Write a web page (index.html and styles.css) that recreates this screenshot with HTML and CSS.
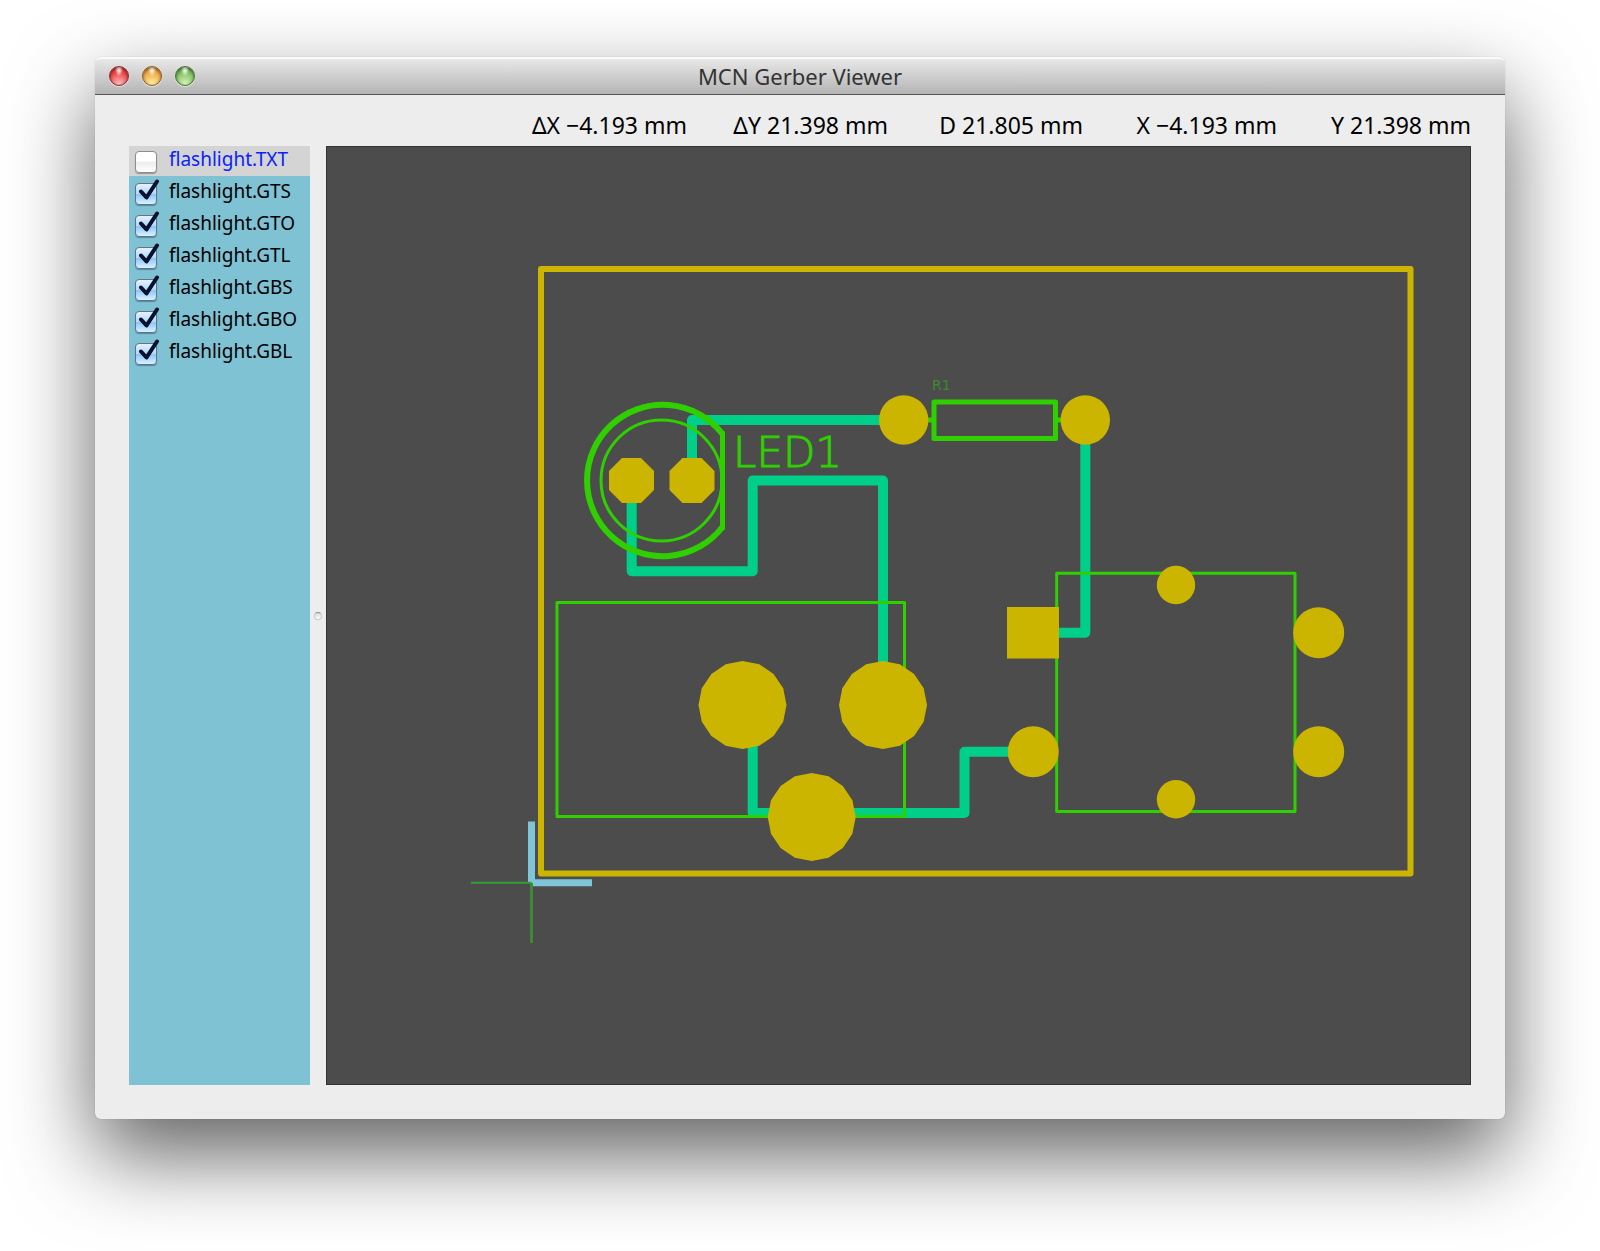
FILE: index.html
```html
<!DOCTYPE html>
<html lang="en">
<head>
<meta charset="utf-8">
<meta name="viewport" content="width=device-width, initial-scale=1">
<title>MCN Gerber Viewer</title>
<link rel="stylesheet" href="styles.css">
</head>
<body>
<div class="window">
  <header class="titlebar">
    <div class="lights">
      <button class="light light-close" type="button" aria-label="Close"></button>
      <button class="light light-minimize" type="button" aria-label="Minimize"></button>
      <button class="light light-zoom" type="button" aria-label="Zoom"></button>
    </div>
    <h1 class="title">MCN Gerber Viewer</h1>
  </header>
  <main class="content">
    <div class="readouts">
      <output>ΔX −4.193 mm</output>
      <output>ΔY 21.398 mm</output>
      <output>D 21.805 mm</output>
      <output>X −4.193 mm</output>
      <output>Y 21.398 mm</output>
    </div>
    <div class="split">
      <ul class="layers">
        <li class="layer layer-selected"><span class="tick"><input type="checkbox" id="txt"><svg viewBox="0 0 26 26" aria-hidden="true"><path d="M6 12.5 11.5 18.5 22 2.500"/></svg></span><label for="txt">flashlight.TXT</label></li>
        <li class="layer"><span class="tick"><input type="checkbox" id="gts" checked><svg viewBox="0 0 26 26" aria-hidden="true"><path d="M6 12.5 11.5 18.5 22 2.500"/></svg></span><label for="gts">flashlight.GTS</label></li>
        <li class="layer"><span class="tick"><input type="checkbox" id="gto" checked><svg viewBox="0 0 26 26" aria-hidden="true"><path d="M6 12.5 11.5 18.5 22 2.500"/></svg></span><label for="gto">flashlight.GTO</label></li>
        <li class="layer"><span class="tick"><input type="checkbox" id="gtl" checked><svg viewBox="0 0 26 26" aria-hidden="true"><path d="M6 12.5 11.5 18.5 22 2.500"/></svg></span><label for="gtl">flashlight.GTL</label></li>
        <li class="layer"><span class="tick"><input type="checkbox" id="gbs" checked><svg viewBox="0 0 26 26" aria-hidden="true"><path d="M6 12.5 11.5 18.5 22 2.500"/></svg></span><label for="gbs">flashlight.GBS</label></li>
        <li class="layer"><span class="tick"><input type="checkbox" id="gbo" checked><svg viewBox="0 0 26 26" aria-hidden="true"><path d="M6 12.5 11.5 18.5 22 2.500"/></svg></span><label for="gbo">flashlight.GBO</label></li>
        <li class="layer"><span class="tick"><input type="checkbox" id="gbl" checked><svg viewBox="0 0 26 26" aria-hidden="true"><path d="M6 12.5 11.5 18.5 22 2.500"/></svg></span><label for="gbl">flashlight.GBL</label></li>
      </ul>
      <div class="divider" role="separator" aria-orientation="vertical"><span class="grip"></span></div>
      <svg class="board" viewBox="326 146 1145 939" role="img" aria-label="Flashlight circuit board">
        <defs>
          <polygon id="pad16" points="0,-44 16.8,-40.7 31.1,-31.1 40.7,-16.8 44,0 40.7,16.8 31.1,31.1 16.8,40.7 0,44 -16.8,40.7 -31.1,31.1 -40.7,16.8 -44,0 -40.7,-16.8 -31.1,-31.1 -16.8,-40.7"/>
          <polygon id="pad8" points="-9.5,-22.5 9.5,-22.5 22.5,-9.5 22.5,9.5 9.5,22.5 -9.5,22.5 -22.5,9.5 -22.5,-9.5"/>
        </defs>
        <g class="copper">
          <path d="M692 480.500V420H904"/>
          <path d="M631.700 480.500V571.300H752.700V480.500H883V705"/>
          <path d="M1085.300 420V632.700H1033"/>
          <path d="M752.700 720V813H964.500V751.700H1033"/>
        </g>
        <g class="silk">
          <path class="heavy" d="M722.500 434A75.700 75.700 0 1 0 722.500 527"/>
          <path class="medium" d="M722.500 433V528"/>
          <circle cx="661.500" cy="480.500" r="60.500"/>
          <path class="medium" d="M934 402H1055.500V438.500H934ZM925 420H934M1055.500 420H1065"/>
          <rect x="557" y="602.500" width="347.500" height="214"/>
          <rect x="1056.700" y="573.300" width="238.300" height="238.300"/>
        </g>
        <rect class="outline" x="541" y="269" width="869.500" height="604.500"/>
        <g class="pads">
          <use href="#pad8" x="631.500" y="480.500"/>
          <use href="#pad8" x="692" y="480.500"/>
          <circle cx="903.700" cy="420" r="24.700"/>
          <circle cx="1085.300" cy="420" r="24.700"/>
          <rect x="1007" y="607" width="52" height="51.500"/>
          <circle cx="1033.200" cy="751.700" r="25.500"/>
          <circle cx="1318.700" cy="632.700" r="25.500"/>
          <circle cx="1318.700" cy="751.700" r="25.500"/>
          <circle cx="1176" cy="585" r="19.200"/>
          <circle cx="1176" cy="799.300" r="19.200"/>
          <use href="#pad16" x="742.500" y="705"/>
          <use href="#pad16" x="883" y="705"/>
          <use href="#pad16" x="811.700" y="817"/>
        </g>
        <path class="origin" d="M531.500 821.500V883M531.500 882.700H592"/>
        <path class="cursor" d="M471 882.700H531.500"/>
        <path class="cursor-y" d="M531.500 883V943"/>
        <text class="led" x="733" y="467">LED1</text>
        <text class="ref" x="932" y="390">R1</text>
      </svg>
    </div>
  </main>
</div>
</body>
</html>
```
FILE: styles.css
```css
* { box-sizing: border-box; }

body {
  margin: 0;
  padding: 57px 95px 132px;
  min-height: 100vh;
  display: flex;
  background: #fff;
  font-family: "Noto Sans", "Open Sans", sans-serif;
  color: #000;
}

.window {
  flex: 1;
  min-width: 0;
  display: flex;
  flex-direction: column;
  background: #ededed;
  border-radius: 6px;
  box-shadow: 0 36px 84px rgba(0, 0, 0, 0.62), 0 0 1px rgba(0, 0, 0, 0.3);
}

.titlebar {
  display: grid;
  grid-template-columns: 1fr auto 1fr;
  align-items: center;
  height: 38px;
  padding: 0 14px 1px;
  border-top: 2px solid #fafafa;
  border-bottom: 1px solid #555;
  border-radius: 6px 6px 0 0;
  background: linear-gradient(#e8e8e8, #b4b4b4);
}

.lights { display: flex; gap: 13px; }

.light {
  width: 20px;
  height: 20px;
  padding: 0;
  border: 1px solid;
  border-radius: 50%;
  box-shadow: inset 0 1px 3px rgba(0, 0, 0, 0.5), 0 1px 1px rgba(255, 255, 255, 0.7);
}

.light-close {
  border-color: #8d2b2b;
  background: radial-gradient(ellipse at 50% 12%, #ffe4e4 0 8%, transparent 32%), radial-gradient(circle at 50% 95%, #ffc4c4, #ee4646 60%, #c93535);
}

.light-minimize {
  border-color: #8f5c1e;
  background: radial-gradient(ellipse at 50% 12%, #fff3dc 0 8%, transparent 32%), radial-gradient(circle at 50% 95%, #fff2a8, #eeac49 60%, #c78130);
}

.light-zoom {
  border-color: #44752f;
  background: radial-gradient(ellipse at 50% 12%, #effbe6 0 8%, transparent 32%), radial-gradient(circle at 50% 95%, #dcf8b8, #83c267 60%, #57963f);
}

.title {
  margin: 0;
  font-size: 22px;
  line-height: 30px;
  font-weight: 400;
  color: #333;
}

.content {
  flex: 1;
  display: flex;
  flex-direction: column;
  padding: 15px 34px 34px;
}

.readouts {
  display: grid;
  grid-template-columns: 1fr 201px 195px 194px 194px;
  height: 36px;
  font-size: 23px;
  line-height: 30px;
  text-align: right;
  white-space: nowrap;
}

.split {
  flex: 1;
  display: grid;
  grid-template-columns: 181px 16px minmax(0, 1fr);
}

.layers {
  display: flex;
  flex-direction: column;
  gap: 2px;
  margin: 0;
  padding: 0;
  list-style: none;
  background: #7fc2d4;
}

.layer {
  display: flex;
  height: 30px;
  padding-left: 6px;
  gap: 12px;
  font-size: 19px;
  line-height: 26px;
}

.layer-selected { background: #d4d4d4; color: #0a22ff; }

.tick {
  position: relative;
  width: 22px;
  height: 22px;
  margin-top: 5px;
}

.tick input {
  appearance: none;
  display: block;
  width: 22px;
  height: 22px;
  margin: 0;
  border: 1px solid #8d8d8d;
  border-radius: 4px;
  background: linear-gradient(#fff 45%, #ececec 50%, #fff);
  box-shadow: 0 1px 1px rgba(0, 0, 0, 0.3);
}

.tick input:checked {
  border-color: #5f7490;
  background: linear-gradient(#e6f1fc, #b5d8f8 48%, #8fc4f5 52%, #d8f2ff);
}

.tick svg {
  position: absolute;
  left: 0;
  top: -4px;
  width: 26px;
  height: 26px;
  display: none;
  pointer-events: none;
  fill: none;
  stroke: #061230;
  stroke-width: 4;
  stroke-linecap: round;
  stroke-linejoin: round;
}

.tick input:checked + svg { display: block; }

.divider {
  display: flex;
  align-items: center;
  justify-content: center;
}

.grip {
  width: 8px;
  height: 8px;
  border: 1px solid #c8c8c8;
  border-top-color: #909090;
  border-radius: 50%;
  background: linear-gradient(#d8d8d8, #fff);
}

.board {
  display: block;
  width: 100%;
  height: 100%;
  background: #4c4c4c;
  box-shadow: inset 0 0 0 1px #333;
}

.copper { fill: none; stroke: #00cf8a; stroke-width: 10; stroke-linejoin: round; }
.silk { fill: none; stroke: #2fcf00; stroke-width: 3; stroke-linejoin: round; }
.silk .medium { stroke-width: 5; stroke-linecap: round; }
.silk .heavy { stroke-width: 6; }
.outline { fill: none; stroke: #ccb500; stroke-width: 6; stroke-linejoin: round; }
.pads { fill: #ccb500; }
.origin { fill: none; stroke: #80c4d8; stroke-width: 7; }
.cursor { stroke: #30a030; stroke-width: 2; }
.cursor-y { stroke: #3e8838; stroke-width: 3; }
.led { font: 200 42px "DejaVu Sans", sans-serif; fill: #2fcf00; stroke: #2fcf00; stroke-width: 1; }
.ref { font: 400 14px "DejaVu Sans", sans-serif; fill: #3a8a2c; }
```
